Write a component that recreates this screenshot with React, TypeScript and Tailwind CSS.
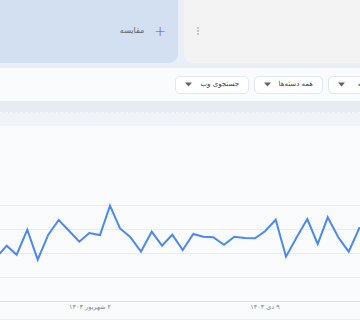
import React from "react";

const points: [number, number][] = [
	[-3.6, 258.4], [6.7, 246.7], [16.7, 255.7], [27.3, 230.7], [37.7, 260.7], [48.3, 235.7],
	[58.7, 221], [69, 231.7], [79.3, 242.7], [89.3, 234], [100, 236], [110, 206.7],
	[120, 229.5], [130, 237.7], [141, 252.7], [151.7, 232.7], [162, 246.7], [172.3, 235.7],
	[182.7, 251], [193.3, 235], [203.3, 237.7], [213.3, 238.3], [224, 245.7], [234.3, 237.7],
	[244.7, 239], [255, 239.3], [265, 232.3], [275.7, 220.7], [286, 257.7], [296.7, 238.3],
	[307.3, 220], [317.7, 245], [327.7, 218.3], [338.3, 238.3], [348.7, 252.7], [359.3, 229],
	[369.6, 225],
];

function Caret() {
	return (
		<svg width="7" height="5" viewBox="0 0 7 5" className="shrink-0">
			<path d="M0 0.5h7L3.5 4.5z" fill="#5f6368" />
		</svg>
	);
}

function FilterButton({ label, width }: { label: string; width: string }) {
	return (
		<div
			dir="rtl"
			className={`${width} h-[18px] shrink-0 flex items-center justify-between px-[9px] rounded-[5px] border border-[#e2e6ed] bg-white text-[7px] text-[#3c4043]`}
		>
			<span>{label}</span>
			<Caret />
		</div>
	);
}

export default function App() {
	const line = points.map((p) => p.join(",")).join(" ");
	return (
		<div
			className="w-[360px] h-[320px] overflow-hidden bg-[#e9eef7]"
			style={{ fontFamily: '"DejaVu Sans", sans-serif' }}
		>
			{/* compare cards */}
			<div className="flex gap-[6px] h-[63px]">
				<div className="w-[178px] shrink-0 bg-[#d3e0f2] rounded-br-[9px] flex items-center justify-end pr-[12px] pb-[2px]">
					<div dir="rtl" className="flex items-center gap-[10px] text-[#5f6368]">
						<span className="text-[14px] leading-none font-light">+</span>
						<span className="text-[8px]">مقایسه</span>
					</div>
				</div>
				<div className="flex-1 bg-[#f3f3f3] rounded-bl-[9px] flex items-center pl-[13px] pb-[2px]">
					<div className="flex flex-col gap-[1px]">
						<span className="w-[2px] h-[2px] bg-[#c4c7cc]" />
						<span className="w-[2px] h-[2px] bg-[#c4c7cc]" />
						<span className="w-[2px] h-[2px] bg-[#c4c7cc]" />
					</div>
				</div>
			</div>

			{/* filters */}
			<div className="mt-[5px] h-[33px] bg-[#f9fbfd] flex items-center gap-[5px] pl-[175px] overflow-hidden">
				<FilterButton label="جستجوی وب" width="w-[74px]" />
				<FilterButton label="همه دسته‌ها" width="w-[69px]" />
				<FilterButton label="۱۲ ماه گذشته" width="w-[80px]" />
			</div>

			<div className="h-[12px] bg-[#e7ebf3] border-b border-dashed border-[#f3f5f9]" />
			<div className="h-[13px] bg-[#f0f3f8]" />

			{/* chart */}
			<div className="bg-[#fafbfd]">
				<svg width="360" height="193" viewBox="0 127 360 193" className="block">
					{[206, 230, 254, 278].map((y) => (
						<line key={y} x1="0" x2="360" y1={y + 0.5} y2={y + 0.5} stroke="#eceef1" strokeWidth="1" />
					))}
					<line x1="0" x2="360" y1="302.5" y2="302.5" stroke="#dadce0" strokeWidth="1" />
					<polyline points={line} fill="none" stroke="#4a89f3" strokeWidth="2" strokeLinejoin="miter" />
					<text x="90" y="310" textAnchor="middle" fontSize="6.5" fill="#80868b" direction="rtl">
						۲ شهریور ۱۴۰۳
					</text>
					<text x="265" y="310" textAnchor="middle" fontSize="6.5" fill="#80868b" direction="rtl">
						۹ دی ۱۴۰۳
					</text>
				</svg>
			</div>
		</div>
	);
}
